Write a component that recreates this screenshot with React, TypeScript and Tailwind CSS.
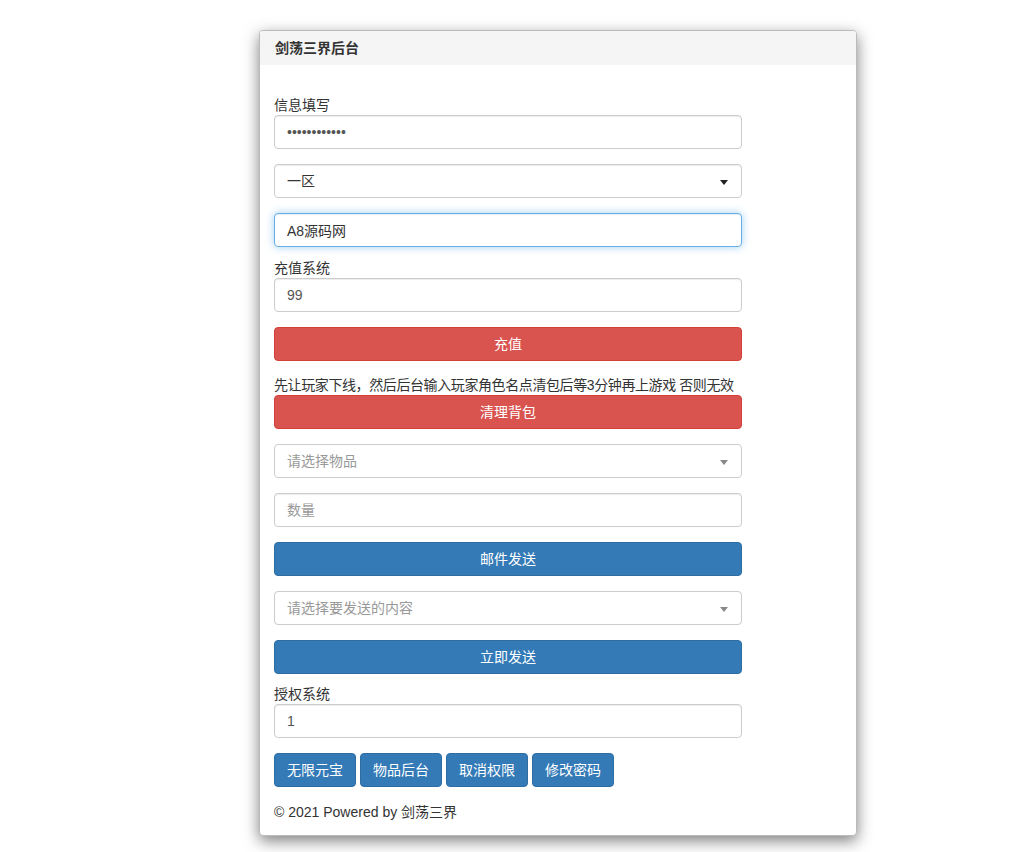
import React from 'react'

const font = { fontFamily: '"Liberation Sans", "Noto Sans CJK SC", sans-serif' }

const inputCls =
  'block w-full h-[34px] px-3 text-[14px] text-[#555] bg-white border border-[#ccc] rounded-[4px] shadow-[inset_0_1px_1px_rgba(0,0,0,0.075)] outline-none placeholder:text-[#999]'

function Caret({ light }: { light?: boolean }) {
  return (
    <span
      className={`absolute right-[13px] top-[15px] w-0 h-0 border-l-[4px] border-r-[4px] border-t-[5px] border-l-transparent border-r-transparent ${
        light ? 'border-t-[#888]' : 'border-t-[#222]'
      }`}
    />
  )
}

function FakeSelect({ text, placeholder }: { text: string; placeholder?: boolean }) {
  return (
    <div
      className={`relative flex items-center w-full h-[34px] px-3 bg-white border rounded-[4px] text-[14px] ${
        placeholder ? 'border-[#ccc] text-[#999]' : 'border-[#ccc] text-[#333] shadow-[inset_0_1px_1px_rgba(0,0,0,0.075)]'
      }`}
    >
      {text}
      <Caret light={placeholder} />
    </div>
  )
}

function Btn({ color, children }: { color: 'red' | 'blue'; children: React.ReactNode }) {
  return (
    <button
      className={`block w-full h-[34px] text-[14px] text-white rounded-[4px] border ${
        color === 'red' ? 'bg-[#d9534f] border-[#d43f3a]' : 'bg-[#337ab7] border-[#2e6da4]'
      }`}
    >
      {children}
    </button>
  )
}

export default function App() {
  return (
    <div className="min-h-[852px] bg-white text-[#333] text-[14px]" style={font}>
      <div className="pt-[30px] pl-[259px]">
        <div className="w-[598px] bg-white border border-[#bbb] rounded-[4px] shadow-[0_5px_15px_rgba(0,0,0,0.5)] overflow-hidden">
          <div className="h-[34px] px-[15px] flex items-center bg-[#f5f5f5] font-bold text-[14px] text-[#333]">
            剑荡三界后台
          </div>
          <div className="px-[14px] pt-[31px] pb-[13px]">
            <div className="w-[468px]">
              <div className="h-[19px] leading-[19px]">信息填写</div>
              <input className={inputCls} type="password" defaultValue="123456789012" readOnly />
              <div className="mt-[15px]">
                <FakeSelect text="一区" />
              </div>
              <input
                className={`${inputCls} mt-[15px] !border-[#66afe9] !shadow-[inset_0_1px_1px_rgba(0,0,0,0.075),0_0_8px_rgba(102,175,233,0.6)] !text-[#333]`}
                defaultValue="A8源码网"
                autoFocus
              />
              <div className="mt-[11px] h-[20px] leading-[20px]">充值系统</div>
              <input className={inputCls} defaultValue="99" />
              <div className="mt-[15px]">
                <Btn color="red">充值</Btn>
              </div>
              <div className="mt-[14px] h-[20px] leading-[20px] whitespace-nowrap tracking-[-0.4px]">
                先让玩家下线，然后后台输入玩家角色名点清包后等3分钟再上游戏 否则无效
              </div>
              <Btn color="red">清理背包</Btn>
              <div className="mt-[15px]">
                <FakeSelect text="请选择物品" placeholder />
              </div>
              <input className={`${inputCls} mt-[15px]`} placeholder="数量" />
              <div className="mt-[15px]">
                <Btn color="blue">邮件发送</Btn>
              </div>
              <div className="mt-[15px]">
                <FakeSelect text="请选择要发送的内容" placeholder />
              </div>
              <div className="mt-[15px]">
                <Btn color="blue">立即发送</Btn>
              </div>
              <div className="mt-[11px] h-[19px] leading-[19px]">授权系统</div>
              <input className={inputCls} defaultValue="1" />
              <div className="mt-[15px] flex gap-[4px]">
                {['无限元宝', '物品后台', '取消权限', '修改密码'].map((t) => (
                  <button
                    key={t}
                    className="w-[82px] h-[34px] text-[14px] text-white bg-[#337ab7] border border-[#2e6da4] rounded-[4px]"
                  >
                    {t}
                  </button>
                ))}
              </div>
              <div className="mt-[15px] h-[20px] leading-[20px]">© 2021 Powered by 剑荡三界</div>
            </div>
          </div>
        </div>
      </div>
    </div>
  )
}
